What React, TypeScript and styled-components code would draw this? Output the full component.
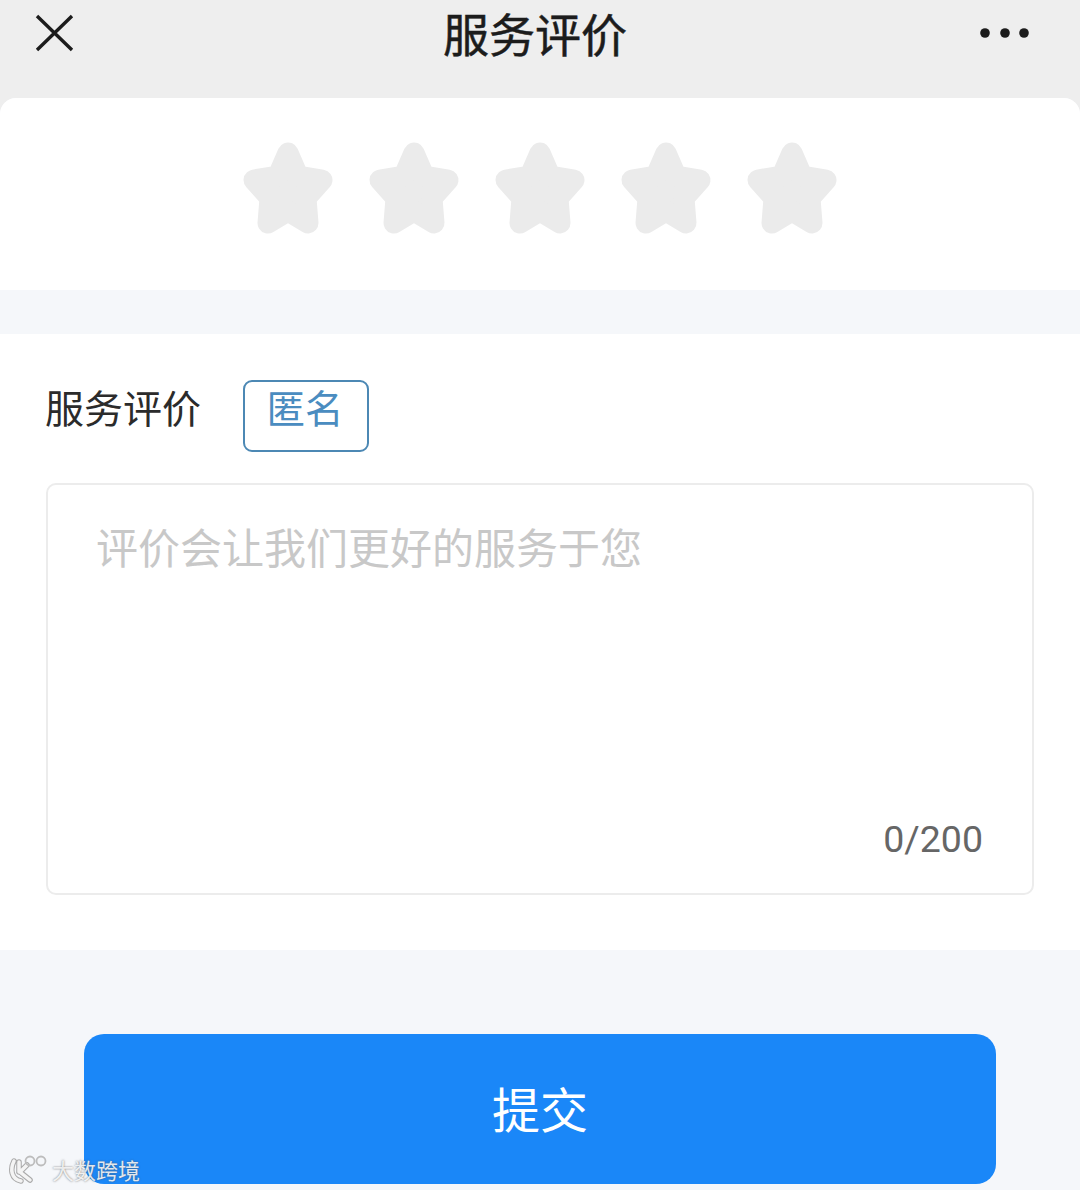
import React from 'react'
import styled, { createGlobalStyle } from 'styled-components'

const cjk = `"Noto Sans CJK SC", "Liberation Sans", sans-serif`

const GlobalStyle = createGlobalStyle`
  html, body {
    margin: 0;
    padding: 0;
    background: #f5f7fa;
  }
  * {
    box-sizing: border-box;
  }
`

const Page = styled.div`
  position: relative;
  width: 1080px;
  height: 1190px;
  overflow: hidden;
  background: #eeeeee;
  font-family: ${cjk};
`

const Header = styled.header`
  display: flex;
  justify-content: space-between;
  align-items: flex-start;
  height: 98px;
  padding: 13px 50px 0 34px;
`

const Title = styled.h1`
  margin: -4px 0 0 16px;
  font-size: 46px;
  line-height: 46px;
  font-weight: 400;
  color: #1c1c1c;
  -webkit-text-stroke: 0.5px #1c1c1c;
  letter-spacing: 0;
`

const IconButton = styled.div`
  display: flex;
  width: ${(p: { $w: number }) => p.$w}px;
  height: 40px;
`

const Body = styled.div`
  background: #f5f7fa;
  border-radius: 16px 16px 0 0;
  overflow: hidden;
  height: 1092px;
`

const RatingCard = styled.section`
  display: flex;
  justify-content: center;
  gap: 34px;
  height: 192px;
  padding-top: 43px;
  background: #ffffff;
`

const FormCard = styled.section`
  height: 616px;
  margin-top: 44px;
  padding: 46px 46px 0;
  background: #ffffff;
`

const LabelRow = styled.div`
  display: flex;
  align-items: flex-start;
  gap: 42px;
  height: 103px;
`

const Label = styled.span`
  font-size: 39px;
  line-height: 52px;
  color: #2b2b2b;
  margin-left: -1px;
`

const Tag = styled.span`
  display: flex;
  justify-content: center;
  width: 126px;
  height: 72px;
  border: 2.5px solid #4c88b4;
  border-radius: 9px;
  font-size: 38.5px;
  line-height: 48px;
  color: #4a8cc0;
`

const TagText = styled.span`
  margin-left: -2px;
`

const TextBox = styled.div`
  display: flex;
  flex-direction: column;
  justify-content: space-between;
  width: 988px;
  height: 412px;
  padding: 31px 49px 32px 48px;
  border: 2.5px solid #ececec;
  border-radius: 10px;
`

const Placeholder = styled.div`
  font-size: 42px;
  line-height: 60px;
  color: #c8c8c8;
`

const Counter = styled.div`
  align-self: flex-end;
  font-family: "Roboto", "Liberation Sans", sans-serif;
  font-size: 37.5px;
  line-height: 44px;
  color: #666666;
`

const Footer = styled.div`
  display: flex;
  justify-content: center;
  padding-top: 84px;
`

const SubmitButton = styled.button`
  width: 912px;
  height: 150px;
  padding: 0 0 4px;
  border: 0;
  border-radius: 20px;
  background: #1a87f8;
  color: #ffffff;
  font-family: ${cjk};
  font-size: 48px;
`

const Watermark = styled.div`
  position: absolute;
  left: 8px;
  bottom: 6px;
  display: flex;
  align-items: center;
  gap: 2px;
  font-size: 22px;
  line-height: 28px;
  color: rgba(255, 255, 255, 0.85);
  text-shadow: 0 0 2px rgba(90, 90, 90, 0.85);
`

const StarIcon = styled.svg`
  overflow: visible;
  display: block;
`

const Star = () => (
  <StarIcon width="92" height="92" viewBox="0 0 92 92">
    <path
      d="M46 12 L56 35 L80 39 L64 57 L66 82 L46 70 L26 82 L28 57 L12 39 L36 35 Z"
      fill="#ebebeb"
      stroke="#ebebeb"
      strokeWidth="21"
      strokeLinejoin="round"
    />
  </StarIcon>
)

const App: React.FC = () => (
  <>
    <GlobalStyle />
    <Page>
      <Header>
        <IconButton $w={40}>
          <svg width="40" height="40" viewBox="0 0 40 40">
            <path d="M3 3 L38 37 M38 3 L3 37" stroke="#1c1c1c" strokeWidth="3.4" fill="none" />
          </svg>
        </IconButton>
        <Title>服务评价</Title>
        <IconButton $w={50}>
          <svg width="50" height="40" viewBox="0 0 50 40">
            <circle cx="5" cy="20" r="4.8" fill="#1c1c1c" />
            <circle cx="25" cy="20" r="4.8" fill="#1c1c1c" />
            <circle cx="44" cy="20" r="4.8" fill="#1c1c1c" />
          </svg>
        </IconButton>
      </Header>
      <Body>
        <RatingCard>
          {[0, 1, 2, 3, 4].map((i) => (
            <Star key={i} />
          ))}
        </RatingCard>
        <FormCard>
          <LabelRow>
            <Label>服务评价</Label>
            <Tag><TagText>匿名</TagText></Tag>
          </LabelRow>
          <TextBox>
            <Placeholder>评价会让我们更好的服务于您</Placeholder>
            <Counter>0/200</Counter>
          </TextBox>
        </FormCard>
        <Footer>
          <SubmitButton>提交</SubmitButton>
        </Footer>
      </Body>
      <Watermark>
        <svg width="42" height="30" viewBox="0 0 42 30" fill="none">
          <path d="M6 7 C2 15 3 25 13 27 M11 8 L11 18 M19 11 L12 18 L22 26" strokeWidth="5.5" stroke="#a9a9a9" strokeLinecap="round" />
          <path d="M6 7 C2 15 3 25 13 27 M11 8 L11 18 M19 11 L12 18 L22 26" strokeWidth="3.5" stroke="#f4f4f4" strokeLinecap="round" />
          <circle cx="22" cy="7" r="4.5" strokeWidth="1.8" stroke="#bdbdbd" />
          <circle cx="33" cy="7" r="4.5" strokeWidth="1.8" stroke="#bdbdbd" />
        </svg>
        大数跨境
      </Watermark>
    </Page>
  </>
)

export default App
